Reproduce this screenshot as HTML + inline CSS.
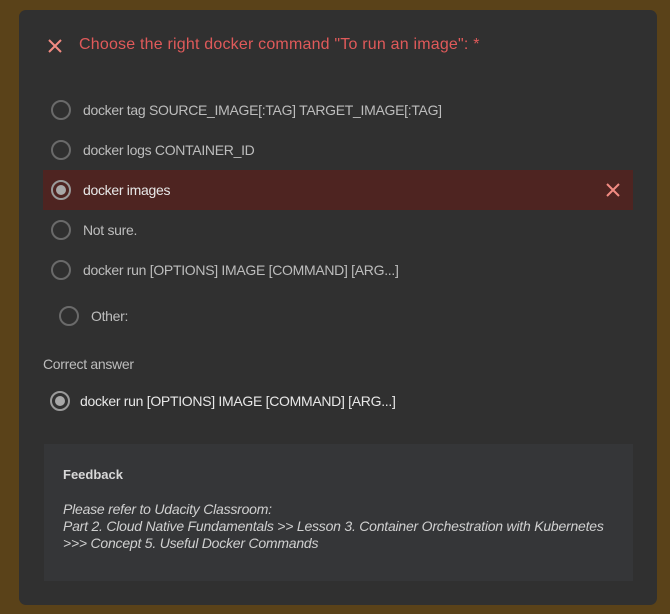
<!DOCTYPE html>
<html><head><style>
body{margin:0;width:670px;height:614px;background:#5a4219;font-family:"Liberation Sans",sans-serif;position:relative;overflow:hidden}
.card{position:absolute;left:19px;top:10px;width:638px;height:595px;background:#303030;border-radius:7px}
.t{position:absolute;white-space:nowrap}
.r{position:absolute;width:20px;height:20px;border:2px solid #6a6a6a;border-radius:50%;box-sizing:border-box}
.opt{color:#bdbdbd;font-size:14px;letter-spacing:-0.3px}
.dot{position:absolute;width:10px;height:10px;border-radius:50%;background:#a8a8a8}
</style></head><body>
<div class="card"></div>
<svg style="position:absolute;left:47px;top:38px" width="16" height="16"><path d="M2 2L14 14M14 2L2 14" stroke="#f28b82" stroke-width="2"/></svg>
<div class="t" style="left:79px;top:36px;font-size:16px;color:#e05a5a;letter-spacing:0.2px">Choose the right docker command "To run an image": *</div>
<div class="r" style="left:51px;top:100px"></div><div class="t opt" style="left:83px;top:102px">docker tag SOURCE_IMAGE[:TAG] TARGET_IMAGE[:TAG]</div>
<div class="r" style="left:51px;top:140px"></div><div class="t opt" style="left:83px;top:142px">docker logs CONTAINER_ID</div>
<div style="position:absolute;left:43px;top:170px;width:590px;height:40px;background:#4e2421"></div>
<div class="r" style="left:51px;top:180px;border-color:#9a9a9a"></div><div class="dot" style="left:56px;top:185px"></div>
<div class="t opt" style="left:83px;top:182px;color:#e8e8e8">docker images</div>
<svg style="position:absolute;left:605px;top:182px" width="16" height="16"><path d="M2 2L14 14M14 2L2 14" stroke="#f28b82" stroke-width="2"/></svg>
<div class="r" style="left:51px;top:220px"></div><div class="t opt" style="left:83px;top:222px">Not sure.</div>
<div class="r" style="left:51px;top:260px"></div><div class="t opt" style="left:83px;top:262px">docker run [OPTIONS] IMAGE [COMMAND] [ARG...]</div>
<div class="r" style="left:59px;top:306px"></div><div class="t opt" style="left:91px;top:308px">Other:</div>
<div class="t opt" style="left:43px;top:356px">Correct answer</div>
<div class="r" style="left:50px;top:391px;border-color:#9a9a9a"></div><div class="dot" style="left:55px;top:396px"></div>
<div class="t opt" style="left:80px;top:393px;color:#e8e8e8">docker run [OPTIONS] IMAGE [COMMAND] [ARG...]</div>
<div style="position:absolute;left:44px;top:444px;width:589px;height:137px;background:#353638"></div>
<div class="t" style="left:63px;top:467px;font-size:13px;font-weight:bold;color:#d8d8d8">Feedback</div>
<div class="t" style="left:63px;top:501px;font-size:14px;font-style:italic;color:#d0d0d0;line-height:17px;letter-spacing:-0.22px">Please refer to Udacity Classroom:<br>Part 2. Cloud Native Fundamentals &gt;&gt; Lesson 3. Container Orchestration with Kubernetes<br>&gt;&gt;&gt; Concept 5. Useful Docker Commands</div>
</body></html>
